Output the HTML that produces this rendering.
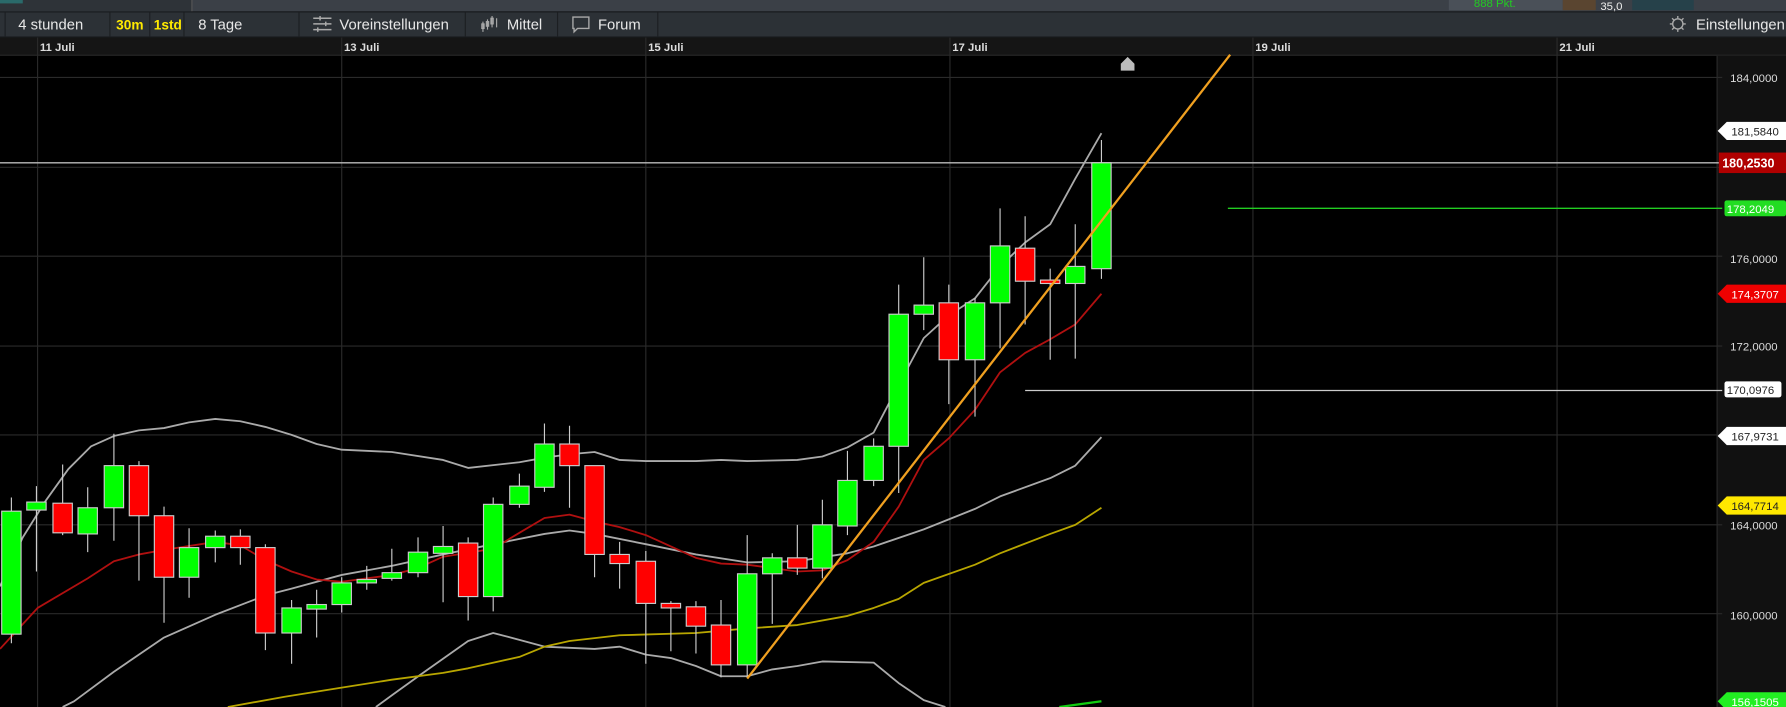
<!DOCTYPE html>
<html><head><meta charset="utf-8"><style>
html,body{margin:0;padding:0;background:#000;overflow:hidden}
svg{display:block}
text{font-family:"Liberation Sans",sans-serif}
</style></head><body>
<svg width="1786" height="707" viewBox="0 0 1568 621" preserveAspectRatio="none">
<rect width="1568" height="621" fill="#000"/>
<rect x="0" y="0" width="1568" height="10" fill="#3b4047"/>
<rect x="0" y="0" width="168" height="10" fill="#2e3338"/>
<rect x="0" y="0" width="20" height="3" fill="#2a6a6a"/>
<rect x="168" y="0" width="1" height="10" fill="#555"/>
<rect x="1272" y="0" width="100" height="9" fill="#4a5058"/>
<text x="1294" y="6" font-size="10" fill="#2c2">888 Pkt.</text>
<rect x="1372" y="0" width="29" height="9" fill="#5a4530"/>
<text x="1405" y="9" font-size="10" fill="#eee">35,0</text>
<rect x="1433" y="0" width="54" height="9" fill="#26414a"/>
<rect x="0" y="10" width="1568" height="23" fill="#2c3136"/>
<rect x="0" y="10" width="1568" height="1" fill="#1a1c1f"/>
<rect x="0" y="32" width="1568" height="1" fill="#1a1c1f"/>
<g fill="#1c1f22">
<rect x="4" y="11" width="1" height="21"/><rect x="96" y="11" width="1" height="21"/><rect x="131" y="11" width="1" height="21"/>
<rect x="161" y="11" width="1" height="21"/><rect x="262" y="11" width="1" height="21"/><rect x="408" y="11" width="1" height="21"/>
<rect x="489" y="11" width="1" height="21"/><rect x="577" y="11" width="1" height="21"/>
</g>
<text x="16" y="26" font-size="13" fill="#e8e8e8">4 stunden</text>
<text x="102" y="26" font-size="12" font-weight="bold" fill="#ffea00">30m</text>
<text x="135" y="26" font-size="12" font-weight="bold" fill="#ffea00">1std</text>
<text x="174" y="26" font-size="13" fill="#e8e8e8">8 Tage</text>
<g stroke="#aaa" stroke-width="1.3" fill="none">
<path d="M275 16h16M275 21h16M275 26h16"/>
<path d="M281 14v4M286 19v4M279 24v4"/>
</g>
<text x="298" y="26" font-size="13" fill="#e8e8e8">Voreinstellungen</text>
<g stroke="#aaa" stroke-width="1" fill="none">
<path d="M424 19v9M428 17v9M432 14v10M436 16v8"/>
<rect x="423" y="21" width="2" height="4"/><rect x="427" y="19" width="2" height="4"/><rect x="431" y="16" width="2" height="5"/>
</g>
<text x="445" y="26" font-size="13" fill="#e8e8e8">Mittel</text>
<path d="M503 15h14v10h-10l-3 3v-3h-1z" stroke="#aaa" stroke-width="1.2" fill="none"/>
<text x="525" y="26" font-size="13" fill="#e8e8e8">Forum</text>
<g stroke="#aaa" stroke-width="1.2" fill="none"><circle cx="1473" cy="21" r="4.5"/><path d="M1473 14v2M1473 26v2M1466 21h2M1478 21h2M1468 16l1.5 1.5M1478 26l-1.5-1.5M1468 26l1.5-1.5M1478 16l-1.5 1.5"/></g>
<text x="1489" y="26" font-size="13" fill="#e8e8e8">Einstellungen</text>
<rect x="0" y="33" width="1568" height="16" fill="#151515"/>
<rect x="0" y="48" width="1568" height="1" fill="#262626"/>
<g font-size="10" font-weight="bold" fill="#ddd">
<text x="35" y="45">11 Juli</text><text x="302" y="45">13 Juli</text><text x="569" y="45">15 Juli</text>
<text x="836" y="45">17 Juli</text><text x="1102" y="45">19 Juli</text><text x="1369" y="45">21 Juli</text>
</g>
<rect x="1507" y="49" width="61" height="572" fill="#111"/>
<rect x="1507" y="49" width="1" height="572" fill="#2a2a2a"/>
<g stroke="#2a2a2a" stroke-width="1">
<path d="M0 68H1512M0 147H1512M0 225H1512M0 304H1512M0 382H1512M0 461H1512M0 539H1512"/>
<path d="M33 33V621M300 33V621M567 33V621M834 33V621M1100 33V621M1367 33V621"/>
</g>
<path d="M0 143H1512" stroke="#bbb" stroke-width="1.2"/>
<path d="M1078 183H1512" stroke="#2c2" stroke-width="1.2"/>
<path d="M900 343H1512" stroke="#ccc" stroke-width="1.2"/>
<path d="M984 62v-6l6-6 6 6v6z" fill="#bbb"/>
<g fill="none" stroke-width="1.6" stroke-linejoin="round">
<polyline stroke="#aaa" points="0,515 20,472 40,440 60,412 80,392 100,383 122,378 144,376 166,371 189,368 211,370 233,375 256,382 278,390 300,395 344,397 389,404 411,411 456,406 478,402 500,399 522,397 544,404 567,405 611,405 633,404 656,405 700,404 722,401 744,393 767,380 789,338 811,297 833,277 856,262 878,234 900,213 922,197 944,157 967,117"/>
<polyline stroke="#aaa" points="55,621 65,616 100,590 144,560 189,540 233,523 256,517 300,505 344,497 389,487 433,478 478,469 500,466 522,469 567,478 611,487 656,494 700,493 744,486 767,480 811,465 856,447 878,436 922,420 944,409 967,384"/>
<polyline stroke="#aaa" points="330,621 345,610 370,592 411,563 433,556 456,562 478,568 522,570 544,568 567,575 589,578 611,585 633,594 656,594 678,588 700,585 722,581 767,582 789,600 811,615 830,621"/>
<polyline stroke="#b01010" points="0,570 33,534 77,508 100,493 122,487 144,483 189,476 211,479 233,492 256,502 278,509 300,511 344,505 367,499 389,489 433,482 456,468 478,455 500,452 522,458 544,463 567,470 589,480 611,490 633,495 656,496 678,499 700,502 722,501 744,492 767,476 789,445 811,404 833,385 856,360 878,327 900,310 922,298 944,285 967,258"/>
<polyline stroke="#b8a600" points="200,621 250,612 300,604 344,597 389,591 411,587 456,577 478,568 500,563 544,558 611,556 656,552 700,549 744,541 767,534 789,526 811,512 856,496 878,486 922,469 944,461 967,446"/>
<polyline stroke="#1c1" stroke-width="2" points="930,621 967,616"/>
</g>
<g stroke="#ccc" stroke-width="1">
<path d="M10 437V565M32 427V502M55 408V470M77 428V485M100 381V475M122 405V510M144 445V547M166 464V525M189 466V494M211 465V496M233 478V571M256 527V583M278 518V560M300 507V538M322 497V518M344 482V510M367 472V507M389 462V529M411 472V545M433 437V537M456 416V446M478 372V432M500 374V446M522 409V507M544 476V517M567 484V583M589 528V572M611 528V574M633 527V595M656 470V595M678 486V548M700 461V505M722 439V508M744 396V470M767 385V427M789 250V433M811 226V290M833 250V355M856 262V366M878 183V306M900 190V285M922 236V316M944 197V315M967 123V245"/>
</g>
<g stroke="#ccc" stroke-width="1">
<g fill="#00ff00">
<rect x="1.5" y="449" width="17" height="108"/><rect x="23.5" y="441" width="17" height="7"/><rect x="68.5" y="446" width="17" height="23"/>
<rect x="91.5" y="409" width="17" height="37"/><rect x="157.5" y="481" width="17" height="26"/><rect x="180.5" y="471" width="17" height="10"/>
<rect x="247.5" y="534" width="17" height="22"/><rect x="269.5" y="531" width="17" height="4"/><rect x="291.5" y="512" width="17" height="19"/>
<rect x="313.5" y="509" width="17" height="3"/><rect x="335.5" y="503" width="17" height="5"/><rect x="358.5" y="485" width="17" height="18"/>
<rect x="380.5" y="480" width="17" height="6"/><rect x="424.5" y="443" width="17" height="81"/><rect x="447.5" y="427" width="17" height="16"/>
<rect x="469.5" y="390" width="17" height="38"/><rect x="647.5" y="504" width="17" height="80"/><rect x="669.5" y="490" width="17" height="14"/>
<rect x="713.5" y="461" width="17" height="38"/><rect x="735.5" y="422" width="17" height="40"/><rect x="758.5" y="392" width="17" height="30"/>
<rect x="780.5" y="276" width="17" height="116"/><rect x="802.5" y="268" width="17" height="8"/><rect x="847.5" y="266" width="17" height="50"/>
<rect x="869.5" y="216" width="17" height="50"/><rect x="935.5" y="234" width="17" height="15"/><rect x="958.5" y="143" width="17" height="93"/>
</g>
<g fill="#ff0000">
<rect x="46.5" y="442" width="17" height="26"/><rect x="113.5" y="409" width="17" height="44"/><rect x="135.5" y="453" width="17" height="54"/>
<rect x="202.5" y="471" width="17" height="10"/><rect x="224.5" y="481" width="17" height="75"/><rect x="402.5" y="477" width="17" height="47"/>
<rect x="491.5" y="390" width="17" height="19"/><rect x="513.5" y="409" width="17" height="78"/><rect x="535.5" y="487" width="17" height="8"/>
<rect x="558.5" y="493" width="17" height="37"/><rect x="580.5" y="530" width="17" height="4"/><rect x="602.5" y="533" width="17" height="17"/>
<rect x="624.5" y="549" width="17" height="35"/><rect x="691.5" y="490" width="17" height="9"/><rect x="824.5" y="266" width="17" height="50"/>
<rect x="891.5" y="218" width="17" height="29"/><rect x="913.5" y="246" width="17" height="3"/>
</g>
</g>
<path d="M656 596L1080 48" stroke="#f0a020" stroke-width="2"/>
<g font-size="10" fill="#ddd">
<text x="1519" y="72">184,0000</text><text x="1519" y="231">176,0000</text><text x="1519" y="308">172,0000</text>
<text x="1519" y="465">164,0000</text><text x="1519" y="544">160,0000</text>
</g>
<path d="M1508 115l8-8h52v16h-52z" fill="#fff"/><text x="1520" y="119" font-size="10" fill="#222">181,5840</text>
<rect x="1509" y="134" width="59" height="18" fill="#b00000"/><text x="1512" y="147" font-size="11" font-weight="bold" fill="#fff">180,2530</text>
<rect x="1514" y="176" width="54" height="14" rx="2" fill="#22dd22"/><text x="1516" y="187" font-size="10" fill="#fff">178,2049</text>
<path d="M1508 258l8-8h52v16h-52z" fill="#ee0000"/><text x="1520" y="262" font-size="10" fill="#fff">174,3707</text>
<rect x="1514" y="335" width="50" height="14" rx="2" fill="#fff"/><text x="1516" y="346" font-size="10" fill="#222">170,0976</text>
<path d="M1508 383l8-8h52v16h-52z" fill="#fff"/><text x="1520" y="387" font-size="10" fill="#222">167,9731</text>
<path d="M1508 444l8-8h52v16h-52z" fill="#ffe800"/><text x="1520" y="448" font-size="10" fill="#222">164,7714</text>
<path d="M1508 616l8-8h52v16h-52z" fill="#22ee22"/><text x="1520" y="620" font-size="10" fill="#fff">156,1505</text>
</svg>
</body></html>
